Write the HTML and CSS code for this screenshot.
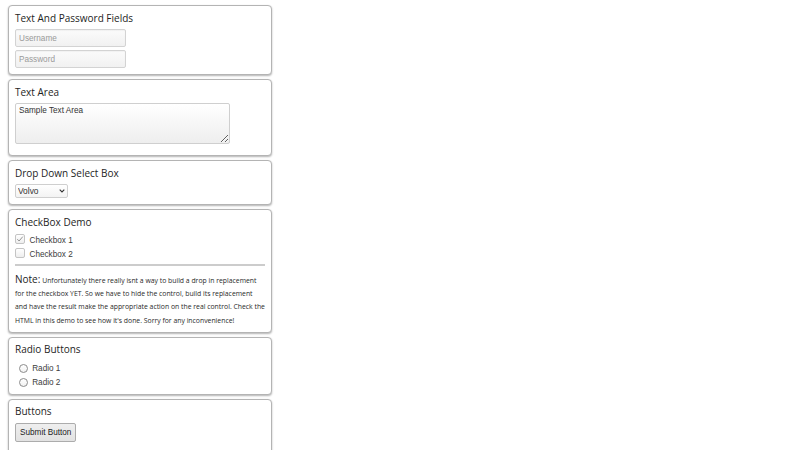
FILE: index.html
```html
<!DOCTYPE html>
<html lang="en">
<head>
<meta charset="utf-8">
<title>Form Controls Demo</title>
<link rel="stylesheet" href="styles.css">
</head>
<body>
<main class="stack">
  <section class="card">
    <h2 class="card-title">Text And Password Fields</h2>
    <div class="fields">
      <input class="field" type="text" placeholder="Username">
      <input class="field" type="password" placeholder="Password">
    </div>
  </section>

  <section class="card">
    <h2 class="card-title">Text Area</h2>
    <textarea class="area">Sample Text Area</textarea>
  </section>

  <section class="card">
    <h2 class="card-title">Drop Down Select Box</h2>
    <div class="select-wrap">
      <select class="select">
        <option>Volvo</option>
        <option>Saab</option>
        <option>Mercedes</option>
        <option>Audi</option>
      </select>
      <svg class="chev" width="6" height="4" viewBox="0 0 6 4"><path d="M0.7 0.7 L3 3 L5.3 0.7" fill="none" stroke="#333" stroke-width="1.1"/></svg>
    </div>
  </section>

  <section class="card">
    <h2 class="card-title">CheckBox Demo</h2>
    <div class="checks">
      <label class="check-row">
        <span class="check-box checked"><svg width="8" height="8" viewBox="0 0 8 8"><path d="M1.3 4.2 L3.1 6 L6.8 1.6" fill="none" stroke="#8a8a8a" stroke-width="0.9"/></svg></span>
        <span class="check-label">Checkbox 1</span>
      </label>
      <label class="check-row">
        <span class="check-box"></span>
        <span class="check-label">Checkbox 2</span>
      </label>
    </div>
    <hr class="rule">
    <p class="note"><span class="note-lead">Note:</span> Unfortunately there really isnt a way to build a drop in replacement for the checkbox YET. So we have to hide the control, build its replacement and have the result make the appropriate action on the real control. Check the HTML in this demo to see how it's done. Sorry for any inconvenience!</p>
  </section>

  <section class="card">
    <h2 class="card-title">Radio Buttons</h2>
    <div class="radios">
      <label class="radio-row"><span class="radio"></span><span class="radio-label">Radio 1</span></label>
      <label class="radio-row"><span class="radio"></span><span class="radio-label">Radio 2</span></label>
    </div>
  </section>

  <section class="card">
    <h2 class="card-title">Buttons</h2>
    <button class="btn" type="button">Submit Button</button>
  </section>
</main>
</body>
</html>
```

FILE: styles.css
```css
html, body {
  margin: 0;
  padding: 0;
  background: #ffffff;
}

body {
  padding: 5px 8px;
  font-family: "Open Sans", "Noto Sans", sans-serif;
  color: #222;
}

.stack {
  width: 264px;
  display: flex;
  flex-direction: column;
  gap: 4px;
}

.card {
  border: 1px solid #b4b4b4;
  border-radius: 4px;
  box-shadow: 0 1px 2px rgba(0, 0, 0, 0.3);
  padding: 4.5px 6px 6px 6px;
  background: #fff;
}

.card-title {
  margin: 0 0 4.5px 0;
  font-size: 10px;
  line-height: 14px;
  font-weight: 400;
  color: #1e1e1e;
}

.fields {
  display: flex;
  flex-direction: column;
  gap: 3px;
}

.field {
  display: block;
  box-sizing: border-box;
  width: 111px;
  height: 18px;
  margin: 0;
  padding: 0 3px;
  border: 1px solid #d3d3d3;
  border-radius: 2px;
  background: linear-gradient(#fbfbfb, #f1f1f1);
  box-shadow: inset 0 1px 1px rgba(0, 0, 0, 0.04);
  font-family: "Liberation Sans", Arial, sans-serif;
  font-size: 8.2px;
  color: #333;
  outline: none;
}

.field::placeholder {
  color: #9a9a9a;
}

.area {
  display: block;
  box-sizing: border-box;
  width: 215px;
  height: 41px;
  margin: 0 0 5px 0;
  padding: 2px 3px;
  border: 1px solid #cfcfcf;
  border-radius: 2px;
  background: linear-gradient(#ffffff, #eeeeee);
  font-family: "Liberation Sans", Arial, sans-serif;
  font-size: 8.2px;
  line-height: 10px;
  color: #333;
  resize: both;
  outline: none;
}

.select-wrap {
  position: relative;
  width: 53px;
  height: 14px;
  margin-top: 1px;
}

.select {
  display: block;
  box-sizing: border-box;
  appearance: none;
  -webkit-appearance: none;
  width: 53px;
  height: 14px;
  margin: 0;
  padding: 0 0 0 2px;
  border: 1px solid #cfcfcf;
  border-radius: 2px;
  background: linear-gradient(#ffffff, #f3f3f3);
  font-family: "Liberation Sans", Arial, sans-serif;
  font-size: 8.4px;
  line-height: 12px;
  color: #333;
  outline: none;
}

.chev {
  position: absolute;
  left: 44px;
  top: 5px;
  pointer-events: none;
}

.checks {
  display: flex;
  flex-direction: column;
  margin-top: -0.5px;
}

.check-row {
  display: flex;
  align-items: flex-start;
  height: 14px;
}

.check-box {
  box-sizing: border-box;
  width: 10px;
  height: 10px;
  margin-top: 1.5px;
  border: 1px solid #c4c4c4;
  border-radius: 2px;
  background: linear-gradient(#ffffff, #eeeeee);
  display: flex;
  align-items: center;
  justify-content: center;
}

.check-label,
.radio-label {
  font-family: "Liberation Sans", Arial, sans-serif;
  font-size: 8.2px;
  line-height: 14px;
  margin-top: 1.5px;
  color: #3c3c3c;
}

.check-label {
  margin-left: 4.5px;
}

.rule {
  margin: 3.5px 0 0 0;
  height: 0;
  border: 0;
  border-top: 2px solid #cccccc;
}

.note {
  margin: 6.5px 0 -1.5px 0;
  font-size: 6.85px;
  line-height: 13.4px;
  color: #2a2a2a;
}

.note-lead {
  font-size: 10px;
  color: #1e1e1e;
}

.radios {
  display: flex;
  flex-direction: column;
  margin: 1px 0 -1px 0;
}

.radio-row {
  display: flex;
  align-items: flex-start;
  height: 14px;
  padding-left: 3.5px;
}

.radio {
  box-sizing: border-box;
  width: 9px;
  height: 9px;
  margin-top: 3px;
  border: 1px solid #8c8c8c;
  border-radius: 50%;
  background: linear-gradient(#ffffff, #f2f2f2);
}

.radio-label {
  margin-left: 4.7px;
  margin-top: 1.5px;
}

.btn {
  display: block;
  box-sizing: border-box;
  height: 19px;
  margin: 2.5px 0 6px 0;
  padding: 0 4px;
  border: 1px solid #acacac;
  border-radius: 2px;
  background: linear-gradient(#efefef, #e2e2e2);
  font-family: "Liberation Sans", Arial, sans-serif;
  font-size: 8.2px;
  color: #222;
}
```
